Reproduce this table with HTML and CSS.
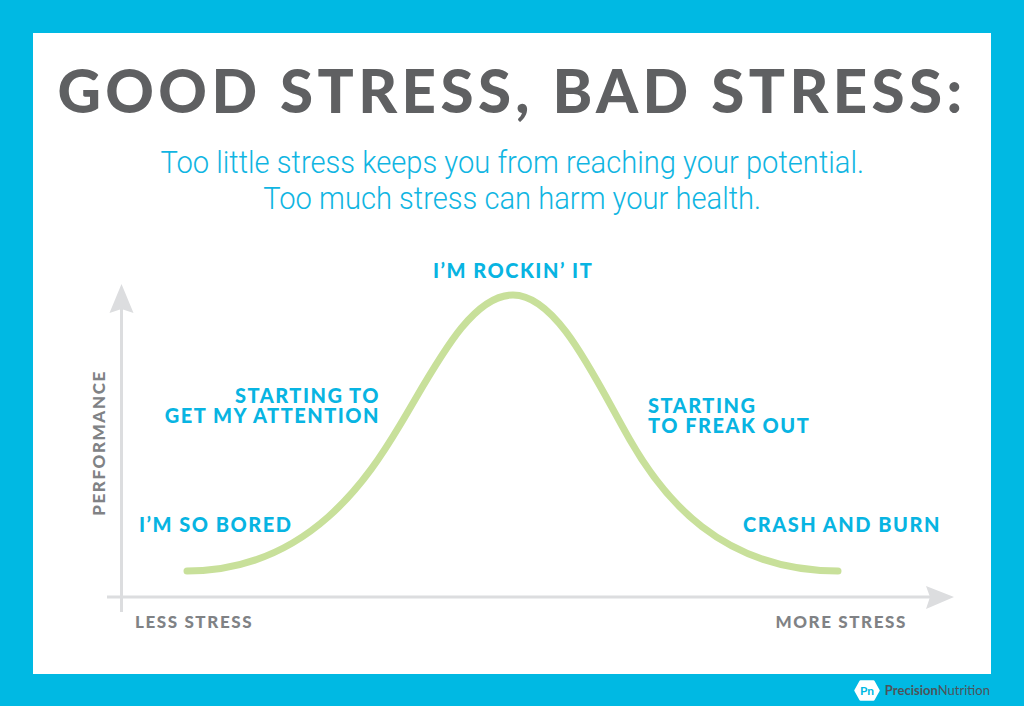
FILE: index.html
```html
<!DOCTYPE html>
<html lang="en">
<head>
<meta charset="utf-8">
<title>Good Stress, Bad Stress</title>
<link rel="stylesheet" href="styles.css">
</head>
<body>
<div class="frame">
  <main class="panel">
    <h1 class="title">GOOD STRESS, BAD STRESS:</h1>
    <p class="subtitle"><span class="sub-inner">Too little stress keeps you from reaching your potential.<br>Too much stress can harm your health.</span></p>
    <div class="chart">
      <svg class="chart-svg" viewBox="33 250 958 424" width="958" height="424" aria-hidden="true">
        <line x1="121.5" y1="300" x2="121.5" y2="612" class="axis"/>
        <polygon points="121.5,284 133.5,313 121.5,309 109.5,313" class="arrow"/>
        <line x1="107" y1="597" x2="935" y2="597" class="axis"/>
        <polygon points="954,597 926,586 930,597 926,609" class="arrow"/>
        <path class="curve" d="M187,571 C310,571 370,475 400,425 C435,367 470,295 513,295 C558,295 596,381 630,440 C662,496 720,571 838,571"/>
      </svg>
      <div class="label blue rockin">I’M ROCKIN’ IT</div>
      <div class="label blue attention"><div>STARTING TO</div><div>GET MY ATTENTION</div></div>
      <div class="label blue freak"><div>STARTING</div><div>TO FREAK OUT</div></div>
      <div class="label blue bored">I’M SO BORED</div>
      <div class="label blue crash">CRASH AND BURN</div>
      <div class="label gray less">LESS STRESS</div>
      <div class="label gray more">MORE STRESS</div>
      <div class="label gray perf">PERFORMANCE</div>
    </div>
  </main>
  <footer class="footer">
    <svg class="logo-mark" viewBox="0 0 26 21" width="26" height="21" aria-hidden="true">
      <polygon points="6.5,1.5 19.5,1.5 24.5,10.5 19.5,19.5 6.5,19.5 1.5,10.5" class="hex"/>
      <text x="13" y="15" class="pn">Pn</text>
    </svg>
    <span class="brand"><span class="brand-strong">Precision</span>Nutrition</span>
  </footer>
</div>
</body>
</html>
```

FILE: styles.css
```css
html, body {
  margin: 0;
  padding: 0;
}

body {
  background: #00b9e3;
  width: 1024px;
  height: 706px;
  overflow: hidden;
  font-family: "Lato", "Open Sans", sans-serif;
}

.frame {
  padding: 33px 33px 0 33px;
}

.panel {
  width: 958px;
  height: 641px;
  background: #ffffff;
  display: flex;
  flex-direction: column;
  align-items: center;
}

.title {
  margin: 27px 0 0 0;
  font-family: "Lato", sans-serif;
  font-weight: 900;
  font-size: 60px;
  line-height: 60px;
  letter-spacing: 4.4px;
  color: #5f6062;
  white-space: nowrap;
}

.subtitle {
  margin: 25px 0 33px 0;
  height: 72px;
  text-align: center;
  white-space: nowrap;
}

.sub-inner {
  display: inline-block;
  font-family: "Roboto", sans-serif;
  font-weight: 300;
  font-size: 31px;
  line-height: 36px;
  color: #10b5e2;
  transform: scaleX(0.94);
  transform-origin: center top;
}

.chart {
  position: relative;
  width: 958px;
  height: 424px;
  flex: none;
}

.chart-svg {
  display: block;
  position: absolute;
  left: 0;
  top: 0;
}

.axis {
  stroke: #dcdddf;
  stroke-width: 3;
}

.arrow {
  fill: #dcdddf;
}

.curve {
  fill: none;
  stroke: #c8e09a;
  stroke-width: 7;
  stroke-linecap: round;
}

.label {
  position: absolute;
  font-family: "Lato", sans-serif;
  font-weight: 900;
  white-space: nowrap;
}

.blue {
  color: #08b4e2;
  font-size: 20px;
  line-height: 20px;
  letter-spacing: 1.5px;
}

.gray {
  color: #808285;
  font-size: 17px;
  line-height: 16px;
  letter-spacing: 1.6px;
}

.rockin {
  left: 400px;
  top: 10px;
}

.attention {
  right: 611px;
  top: 135px;
  text-align: right;
}

.freak {
  left: 615px;
  top: 145px;
}

.bored {
  left: 106px;
  top: 264px;
}

.crash {
  left: 710px;
  top: 264px;
}

.less {
  left: 102px;
  top: 364px;
}

.more {
  right: 84px;
  top: 364px;
}

.perf {
  left: 65.5px;
  top: 192.5px;
  transform: translate(-50%, -50%) rotate(-90deg);
}

.footer {
  height: 32px;
  display: flex;
  align-items: center;
  justify-content: flex-end;
  gap: 5px;
  padding-right: 1px;
}

.logo-mark {
  display: block;
}

.hex {
  fill: #ffffff;
  stroke: #ffffff;
  stroke-width: 2.5;
  stroke-linejoin: round;
}

.pn {
  font-family: "Lato", sans-serif;
  font-weight: 700;
  font-size: 12px;
  fill: #00b9e3;
  text-anchor: middle;
}

.brand {
  font-family: "Lato", sans-serif;
  font-size: 13px;
  color: #4d5359;
  letter-spacing: 0;
}

.brand-strong {
  font-weight: 700;
}
```
